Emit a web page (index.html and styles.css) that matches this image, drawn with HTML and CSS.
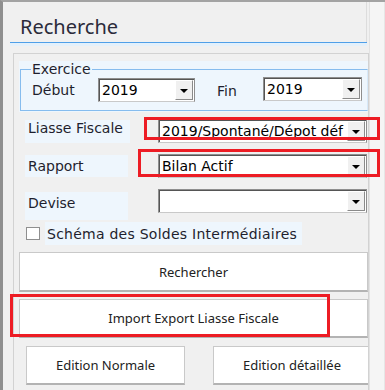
FILE: index.html
```html
<!DOCTYPE html>
<html lang="fr">
<head>
    <meta charset="UTF-8">
    <meta name="viewport" content="width=device-width, initial-scale=1.0">
    <title>Recherche</title>
    <link rel="stylesheet" href="styles.css">
</head>
<body>
    <div class="window">
        <div class="main">
            <div class="header"><span class="title">Recherche</span></div>
            <div class="rule"></div>

            <div class="panel">
                <div class="group">
                    <fieldset class="exercice">
                        <legend>Exercice</legend>
                        <div class="period">
                            <span class="period-label">Début</span>
                            <div class="combo combo-start">
                                <span class="combo-text">2019</span>
                                <span class="drop"><svg width="8" height="4" viewBox="0 0 8 4"><path d="M0 0h8L4 4z"/></svg></span>
                            </div>
                            <span class="period-label period-end">Fin</span>
                            <div class="combo combo-end">
                                <span class="combo-text">2019</span>
                                <span class="drop"><svg width="8" height="4" viewBox="0 0 8 4"><path d="M0 0h8L4 4z"/></svg></span>
                            </div>
                        </div>
                    </fieldset>
                </div>

                <div class="field field-first">
                    <span class="field-label">Liasse Fiscale</span>
                    <div class="combo combo-wide">
                        <span class="combo-text">2019/Spontané/Dépot déf</span>
                        <span class="drop"><svg width="8" height="4" viewBox="0 0 8 4"><path d="M0 0h8L4 4z"/></svg></span>
                    </div>
                </div>

                <div class="field">
                    <span class="field-label field-label-low">Rapport</span>
                    <div class="combo combo-wide">
                        <span class="combo-text">Bilan Actif</span>
                        <span class="drop"><svg width="8" height="4" viewBox="0 0 8 4"><path d="M0 0h8L4 4z"/></svg></span>
                    </div>
                </div>

                <div class="field">
                    <span class="field-label field-label-tall">Devise</span>
                    <div class="combo combo-wide">
                        <span class="combo-text"></span>
                        <span class="drop"><svg width="8" height="4" viewBox="0 0 8 4"><path d="M0 0h8L4 4z"/></svg></span>
                    </div>
                </div>

                <div class="check-row">
                    <span class="check"></span>
                    <span class="check-label">Schéma des Soldes Intermédiaires</span>
                </div>

                <button class="btn btn-search">Rechercher</button>
                <button class="btn btn-import">Import Export Liasse Fiscale</button>
                <div class="btn-row">
                    <button class="btn btn-half">Edition Normale</button>
                    <button class="btn btn-half btn-half-right">Edition détaillée</button>
                </div>
            </div>
        </div>
        <div class="side"></div>

        <div class="mark mark-liasse"></div>
        <div class="mark mark-rapport"></div>
        <div class="mark mark-import"></div>
    </div>
</body>
</html>
```

FILE: styles.css
```css
body {
    margin: 0;
    background-color: #f0f0f0;
    font-family: "DejaVu Sans", Verdana, sans-serif;
    color: #1f1f2e;
}
.window {
    position: relative;
    display: flex;
    width: 382px;
    height: 388px;
    border-top: 2px solid #a3a3a3;
    border-left: 3px solid #8f8f8f;
    overflow: hidden;
}
.main {
    width: 366px;
    flex-shrink: 0;
}
.side {
    flex: 1;
    background-color: #f5f5f5;
    border-left: 1px solid #e2e2e2;
    border-right: 1px solid #e6e6e6;
}
.header {
    display: flex;
    align-items: flex-end;
    box-sizing: border-box;
    width: 357px;
    height: 40px;
    margin-left: 7px;
    padding: 0 0 3px 10px;
    border-right: 1px solid #dcdcdc;
}
.title {
    font-family: "Noto Sans", "Open Sans", sans-serif;
    font-size: 20px;
    line-height: 24px;
    color: #2b2b3a;
}
.rule {
    width: 357px;
    height: 3px;
    margin-left: 7px;
    border-top: 1px solid #4f9fe8;
    background-color: #e3f0fb;
}
.panel {
    box-sizing: border-box;
    width: 356px;
    height: 350px;
    margin: 7px 0 0 10px;
    padding: 7px 0 0 5px;
    border: 1px solid #d2d2d2;
    border-bottom: none;
    overflow: hidden;
}
.group {
    background-color: #eef6fd;
    padding-bottom: 1px;
}
.exercice {
    margin: 0 0 0 1px;
    padding: 0 0 8px 0;
    border: 1px solid #86bcee;
    border-right-color: #d7e9f9;
    min-width: 0;
}
.exercice legend {
    margin-left: 10px;
    padding: 0 1px;
    font-size: 14px;
    line-height: 16px;
}
.period {
    display: flex;
    align-items: center;
    margin-top: 1px;
    padding-left: 11px;
}
.period-label {
    width: 66px;
    font-size: 14px;
    line-height: 16px;
}
.period-end {
    width: 46px;
    margin-left: 22px;
    padding-top: 2px;
}
.combo {
    display: flex;
    align-items: center;
    box-sizing: border-box;
    height: 24px;
    background-color: #fff;
    border: 1px solid #8e8e8e;
    border-bottom-color: #c9c9c9;
    box-shadow: inset 1px 1px 0 #555;
    overflow: hidden;
}
.combo-start {
    width: 97px;
}
.combo-end {
    width: 99px;
    margin-top: -2px;
}
.combo-wide {
    width: 209px;
    margin-left: auto;
}
.combo-text {
    flex: 1;
    min-width: 0;
    padding-left: 3px;
    font-size: 14px;
    line-height: 16px;
    color: #000;
    white-space: nowrap;
    overflow: hidden;
}
.drop {
    display: flex;
    align-items: center;
    justify-content: center;
    box-sizing: border-box;
    width: 18px;
    height: 20px;
    margin-right: 1px;
    background-color: #f0f0f0;
    border-top: 1px solid #fff;
    border-left: 1px solid #fff;
    border-right: 1px solid #8a8a8a;
    border-bottom: 1px solid #8a8a8a;
}
.drop svg {
    fill: #000;
    margin-top: 1px;
}
.field {
    display: flex;
    align-items: flex-start;
    height: 24px;
    margin: 11px 1px 0 0;
}
.field-first {
    margin-top: 7px;
}
.field-label {
    box-sizing: border-box;
    width: 105px;
    height: 23px;
    margin: 1px 0 0 6px;
    padding-left: 3px;
    background-color: #eef6fd;
    font-size: 14px;
    line-height: 16px;
}
.field-label-low {
    padding-top: 3px;
    margin-top: 1px;
    height: 22px;
    width: 103px;
}
.field-label-tall {
    height: 28px;
    margin-top: 3px;
    padding-top: 3px;
    width: 103px;
}
.check-row {
    display: flex;
    align-items: center;
    margin: 9px 0 0 7px;
    height: 23px;
}
.check {
    box-sizing: border-box;
    width: 14px;
    height: 13px;
    background-color: #fff;
    border: 1px solid #8f8f8f;
}
.check-label {
    box-sizing: border-box;
    height: 23px;
    margin-left: 5px;
    padding: 4px 0 0 2px;
    background-color: #eef6fd;
    width: 257px;
    font-size: 14px;
    line-height: 16px;
    letter-spacing: 0.25px;
}
.btn {
    display: block;
    box-sizing: border-box;
    background-color: #fff;
    border: 1px solid #c9c9c9;
    border-bottom: 2px solid #b3b3b3;
    padding: 0;
    font-family: "Noto Sans", "Open Sans", sans-serif;
    font-size: 13px;
    color: #222;
}
.btn-search {
    width: 349px;
    height: 40px;
    margin-top: 7px;
}
.btn-import {
    width: 349px;
    height: 39px;
    margin-top: 7px;
}
.btn-row {
    display: flex;
    gap: 28px;
    margin-top: 8px;
    padding-left: 7px;
}
.btn-half {
    flex-shrink: 0;
    width: 159px;
    height: 39px;
}
.btn-half-right {
    width: 158px;
}
.mark {
    position: absolute;
    box-sizing: border-box;
    border: 3px solid #ed1c24;
}
.mark-liasse {
    left: 141px;
    top: 115px;
    width: 236px;
    height: 23px;
}
.mark-rapport {
    left: 135px;
    top: 147px;
    width: 242px;
    height: 28px;
}
.mark-import {
    left: 7px;
    top: 292px;
    width: 320px;
    height: 43px;
}
```
